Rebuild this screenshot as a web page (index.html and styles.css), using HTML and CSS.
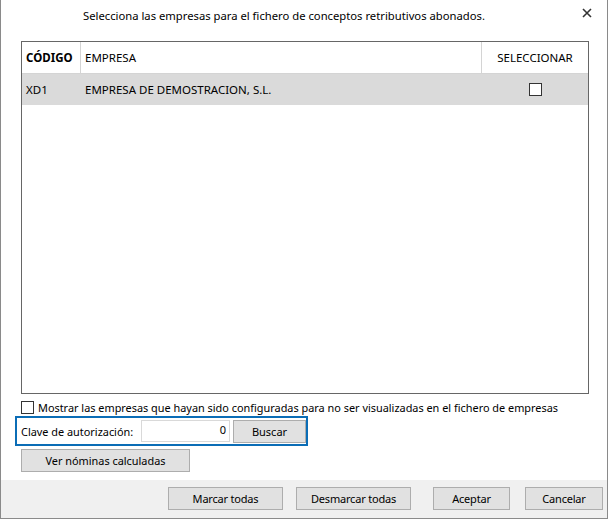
FILE: index.html
```html
<!DOCTYPE html>
<html lang="es">
<head>
<meta charset="utf-8">
<title>Selección de empresas</title>
<link rel="stylesheet" href="styles.css">
</head>
<body>
<div class="window">
  <div class="titlebar">
    <span class="title">Selecciona las empresas para el fichero de conceptos retributivos abonados.</span>
    <button class="close" aria-label="Cerrar">
      <svg width="10" height="10" viewBox="0 0 10 10"><path d="M1 1 L9 9 M9 1 L1 9" stroke="#333" stroke-width="1.6" fill="none"/></svg>
    </button>
  </div>
  <div class="grid">
    <div class="grid-head">
      <div class="c1 bold">CÓDIGO</div>
      <div class="c2">EMPRESA</div>
      <div class="c3 center">SELECCIONAR</div>
    </div>
    <div class="grid-row selected">
      <div class="c1">XD1</div>
      <div class="c2">EMPRESA DE DEMOSTRACION, S.L.</div>
      <div class="c3 center"><span class="chk"></span></div>
    </div>
  </div>
  <label class="opt"><span class="chk"></span><span class="opt-text">Mostrar las empresas que hayan sido configuradas para no ser visualizadas en el fichero de empresas</span></label>
  <div class="clave">
    <span class="clave-label">Clave de autorización:</span>
    <span class="input">0</span>
    <button class="btn buscar">Buscar</button>
  </div>
  <button class="btn ver">Ver nóminas calculadas</button>
  <div class="footer">
    <button class="btn marcar">Marcar todas</button>
    <button class="btn desmarcar">Desmarcar todas</button>
    <button class="btn aceptar">Aceptar</button>
    <button class="btn cancelar">Cancelar</button>
  </div>
</div>
</body>
</html>
```
FILE: styles.css
```css
* { box-sizing: border-box; }
html, body { margin: 0; padding: 0; background: #fff; }
body { font-family: "Noto Sans", "Open Sans", sans-serif; font-size: 12px; color: #000; }

.window {
  width: 608px;
  height: 519px;
  border: 1px solid #8a8a8a;
  border-top: none;
  display: flex;
  flex-direction: column;
  position: relative;
  background: #fff;
}

.titlebar {
  height: 41px;
  padding: 7px 0 0 82px;
  position: relative;
}
.title { line-height: 18px; font-size: 11.25px; white-space: nowrap; }
.close {
  position: absolute;
  right: 14px;
  top: 7px;
  width: 12px;
  height: 12px;
  padding: 0;
  border: none;
  background: none;
  display: flex;
  align-items: center;
  justify-content: center;
}

.grid {
  margin-left: 20px;
  width: 568px;
  height: 353px;
  border: 1px solid #666;
  flex: none;
}
.grid-head, .grid-row {
  display: grid;
  grid-template-columns: 59px 401px 1fr;
  align-items: center;
  font-size: 11.5px;
}
.grid-head { height: 32px; border-bottom: 1px solid #d4d4d4; }
.grid-head > div { height: 31px; line-height: 31px; }
.grid-head .c1, .grid-head .c2 { border-right: 1px solid #d4d4d4; }
.grid-row { height: 31px; }
.grid-row.selected { background: #dadada; }
.c1, .c2 { padding-left: 4px; white-space: nowrap; overflow: hidden; }
.bold { font-weight: bold; }
.center { text-align: center; display: flex; justify-content: center; align-items: center; }

.chk {
  display: inline-block;
  width: 13px;
  height: 13px;
  border: 1px solid #333;
  background: #fff;
  flex: none;
}

.opt {
  display: flex;
  align-items: center;
  margin: 6px 0 0 20px;
  height: 15px;
}
.opt-text { margin-left: 4px; white-space: nowrap; font-size: 10.9px; }

.clave {
  margin: 1px 0 0 14px;
  width: 293px;
  height: 30px;
  border: 2px solid #0b6db6;
  display: flex;
  align-items: center;
  padding-left: 4px;
}
.clave-label { width: 120px; white-space: nowrap; font-size: 10.9px; }
.input {
  width: 89px;
  height: 22px;
  border: 1px solid #d9d9d9;
  text-align: right;
  padding-right: 3px;
  line-height: 18px;
  background: #fff;
  font-size: 11px;
}
.btn {
  font-family: inherit;
  font-size: 11px;
  color: #000;
  background: #e1e1e1;
  border: 1px solid #adadad;
  padding: 0;
  height: 23px;
  white-space: nowrap;
}
.buscar { width: 73px; margin-left: 3px; }
.ver { margin: 3px 0 0 20px; width: 169px; height: 23px; align-self: flex-start; font-size: 10.9px; }

.footer {
  margin-top: auto;
  height: 38px;
  background: #f0f0f0;
  display: flex;
  align-items: flex-start;
  padding-top: 7px;
  padding-left: 167px;
}
.footer .btn { letter-spacing: -0.2px; }
.marcar { width: 115px; }
.desmarcar { width: 115px; margin-left: 13px; }
.aceptar { width: 77px; margin-left: 22px; }
.cancelar { width: 78px; margin-left: 15px; }
```
